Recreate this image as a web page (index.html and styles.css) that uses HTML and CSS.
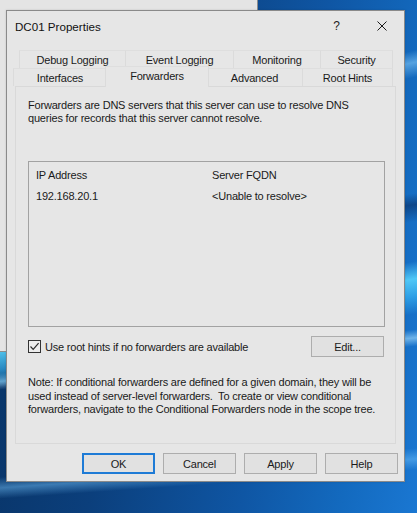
FILE: index.html
```html
<!DOCTYPE html>
<html lang="en">
<head>
<meta charset="utf-8">
<title>DC01 Properties</title>
<link rel="stylesheet" href="styles.css">
</head>
<body>
<div class="desktop">
  <div class="backwin"></div>

  <div class="dialog">
    <div class="titlebar">
      <span class="title">DC01 Properties</span>
      <div class="caption">
        <span class="cap-btn help">?</span>
        <span class="cap-btn close">
          <svg width="10" height="10" viewBox="0 0 10 10"><path d="M0.5 0.5 L9.5 9.5 M9.5 0.5 L0.5 9.5" stroke="#1a1a1a" stroke-width="1" fill="none"/></svg>
        </span>
      </div>
    </div>

    <div class="tabs">
      <div class="tab-row back">
        <div class="tab t-debug">Debug Logging</div>
        <div class="tab t-event">Event Logging</div>
        <div class="tab t-mon">Monitoring</div>
        <div class="tab t-sec">Security</div>
      </div>
      <div class="tab-row front">
        <div class="tab t-if">Interfaces</div>
        <div class="tab t-fwd selected">Forwarders</div>
        <div class="tab t-adv">Advanced</div>
        <div class="tab t-root">Root Hints</div>
      </div>
    </div>

    <div class="panel">
      <p class="desc">Forwarders are DNS servers that this server can use to resolve DNS<br>queries for records that this server cannot resolve.</p>

      <div class="listbox">
        <div class="lrow head"><span class="c1">IP Address</span><span>Server FQDN</span></div>
        <div class="lrow"><span class="c1">192.168.20.1</span><span>&lt;Unable to resolve&gt;</span></div>
      </div>

      <div class="opts">
        <label class="check">
          <span class="box"><svg width="11" height="11" viewBox="0 0 11 11"><path d="M1.5 5.5 L4.2 8.3 L9.6 2.2" stroke="#2b2b2b" stroke-width="1.2" fill="none"/></svg></span>
          Use root hints if no forwarders are available
        </label>
        <button class="btn edit">Edit...</button>
      </div>

      <p class="note">Note: If conditional forwarders are defined for a given domain, they will be<br>used instead of server-level forwarders.&nbsp; To create or view conditional<br>forwarders, navigate to the Conditional Forwarders node in the scope tree.</p>
    </div>

    <div class="actions">
      <button class="btn default">OK</button>
      <button class="btn">Cancel</button>
      <button class="btn">Apply</button>
      <button class="btn">Help</button>
    </div>
  </div>
</div>
</body>
</html>
```

FILE: styles.css
```css
html, body {
  margin: 0;
  padding: 0;
}

body {
  width: 417px;
  height: 513px;
  overflow: hidden;
  font-family: "Liberation Sans", Arial, sans-serif;
  font-size: 11px;
  color: #1a1a1a;
}

/* Windows 10 style wallpaper: deep blue with light beams on the right */
.desktop {
  position: relative;
  width: 417px;
  height: 513px;
  overflow: hidden;
  background:
    linear-gradient(168deg, transparent 23%, rgba(140, 210, 255, 0.55) 25%, transparent 27.5%),
    linear-gradient(172deg, transparent 44%, rgba(10, 40, 90, 0.55) 46%, transparent 49%),
    linear-gradient(170deg, transparent 57%, rgba(90, 215, 255, 0.85) 60%, rgba(60, 190, 250, 0.6) 63%, transparent 66%),
    linear-gradient(174deg, transparent 67%, rgba(170, 225, 255, 0.6) 68.5%, transparent 70%),
    linear-gradient(176deg, transparent 88%, rgba(120, 200, 255, 0.45) 90%, transparent 92%),
    linear-gradient(100deg, #08305f 0%, #0b3f7c 35%, #0f56a4 65%, #136abf 85%, #1a77d2 100%);
}

/* another window sitting behind the dialog */
.backwin {
  position: absolute;
  left: -1px;
  top: -1px;
  width: 259px;
  height: 353px;
  box-sizing: border-box;
  background: #e4e4e4;
  border-right: 1px solid #8d8d8d;
  border-bottom: 1px solid #8d8d8d;
}

.dialog {
  position: absolute;
  left: 6px;
  top: 10px;
  width: 399px;
  height: 472px;
  box-sizing: border-box;
  border: 1px solid #8a8a8a;
  background: #e6e6e6;
  display: flex;
  flex-direction: column;
  box-shadow: 0 0 2px rgba(0, 0, 0, 0.15);
}

/* title bar */
.titlebar {
  height: 30px;
  display: flex;
  align-items: center;
  justify-content: space-between;
  padding-left: 8px;
}

.title {
  font-family: "Liberation Sans", Arial, sans-serif;
  font-size: 11.6px;
  color: #111;
}

.caption {
  display: flex;
  height: 30px;
}

.cap-btn {
  width: 45px;
  height: 30px;
  display: flex;
  align-items: center;
  justify-content: center;
}

.help {
  font-size: 12px;
  color: #222;
}

/* property sheet tabs, two rows */
.tabs {
  margin-top: 9px;
  display: flex;
  flex-direction: column;
}

.tab-row {
  display: flex;
  height: 18px;
  align-items: flex-end;
}

.tab-row.back {
  padding-left: 12px;
}

.tab-row.front {
  padding-left: 6px;
}

.tab {
  box-sizing: border-box;
  height: 18px;
  display: flex;
  align-items: center;
  justify-content: center;
  border: 1px solid #dbdbdb;
  border-bottom: none;
  border-top-color: #dedede;
  letter-spacing: -0.2px;
  white-space: nowrap;
  padding-top: 1px;
}

.tab + .tab {
  border-left: none;
}

.t-debug { width: 107px; }
.t-event { width: 108px; }
.t-mon   { width: 87px; }
.t-sec   { width: 72px; }

.t-if    { width: 94px; }
.t-fwd   { width: 100px; }
.t-adv   { width: 96px; }
.t-root  { width: 90px; }

.tab.selected {
  position: relative;
  z-index: 1;
  height: 21px;
  width: 104px;
  margin: 0 -2px -1px -2px;
  border-left: 1px solid #dbdbdb;
  background: #e6e6e6;
  padding-top: 0;
  padding-bottom: 2px;
}

/* page of the sheet */
.panel {
  margin: 0 8px;
  height: 358px;
  box-sizing: border-box;
  border: 1px solid #d9d9d9;
  padding: 12px 10px 0 12px;
}

.desc, .note {
  margin: 0;
  line-height: 13px;
  letter-spacing: -0.2px;
  white-space: nowrap;
}

.listbox {
  margin-top: 36px;
  height: 166px;
  box-sizing: border-box;
  border: 1px solid #a2a2a2;
  padding: 2px 0 0 7px;
  letter-spacing: -0.2px;
}

.lrow {
  display: flex;
  height: 21px;
  align-items: center;
}

.lrow .c1 {
  width: 176px;
}

.opts {
  margin-top: 9px;
  display: flex;
  align-items: center;
  justify-content: space-between;
  padding-right: 1px;
}

.check {
  display: flex;
  align-items: center;
  gap: 4px;
  letter-spacing: -0.2px;
}

.box {
  width: 13px;
  height: 13px;
  box-sizing: border-box;
  border: 1px solid #333;
  background: #ececec;
  display: flex;
  align-items: center;
  justify-content: center;
}

.btn {
  width: 73px;
  height: 21px;
  box-sizing: border-box;
  border: 1px solid #adadad;
  background: #e1e1e1;
  font-family: "Liberation Sans", Arial, sans-serif;
  font-size: 11px;
  letter-spacing: -0.2px;
  color: #1a1a1a;
  padding: 0;
  margin: 0;
}

.note {
  margin-top: 19px;
  line-height: 13.5px;
}

/* OK / Cancel / Apply / Help */
.actions {
  margin-top: 9px;
  display: flex;
  justify-content: flex-end;
  gap: 8px;
  padding-right: 6px;
}

.btn.default {
  border: 2px solid #1e7bd6;
}
```
